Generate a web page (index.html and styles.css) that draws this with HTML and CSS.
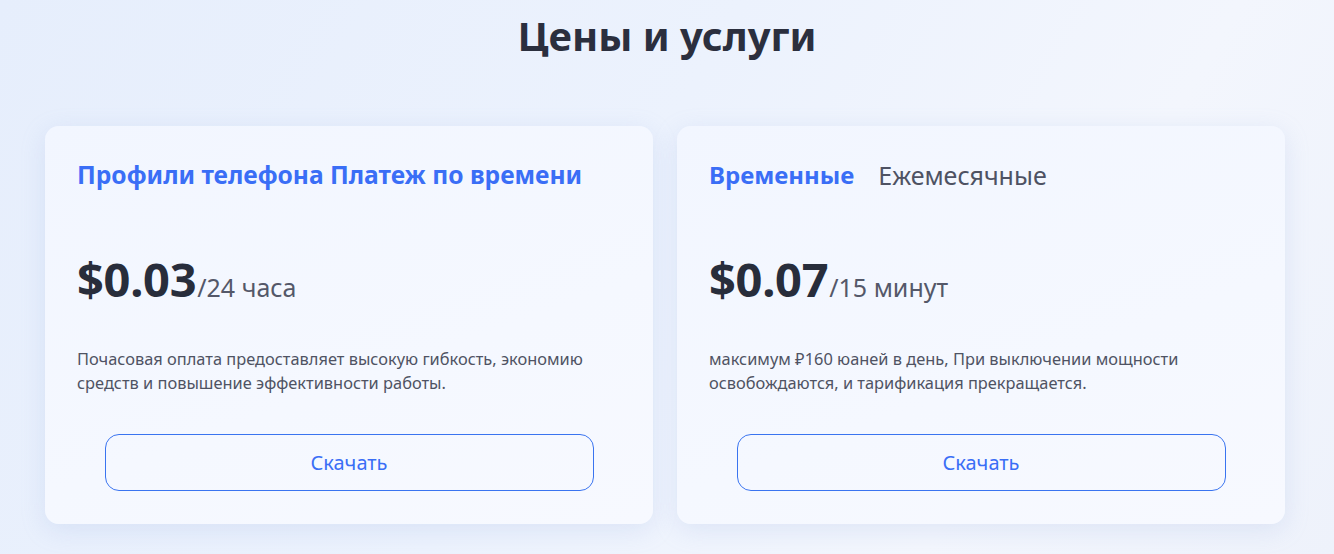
FILE: index.html
```html
<!DOCTYPE html>
<html lang="ru">
<head>
<meta charset="utf-8">
<link rel="stylesheet" href="styles.css">
</head>
<body>
<section class="pricing">
  <h1 class="title">Цены и услуги</h1>
  <div class="cards">
    <div class="card">
      <div class="card-head">
        <span class="tab active heading">Профили телефона Платеж по времени</span>
      </div>
      <div class="price"><span class="amount">$0.03</span><span class="unit">/24 часа</span></div>
      <p class="desc">Почасовая оплата предоставляет высокую гибкость, экономию средств и повышение эффективности работы.</p>
      <div class="btn-row"><button class="btn">Скачать</button></div>
    </div>
    <div class="card">
      <div class="card-head">
        <span class="tab active">Временные</span>
        <span class="tab">Ежемесячные</span>
      </div>
      <div class="price"><span class="amount">$0.07</span><span class="unit">/15 минут</span></div>
      <p class="desc">максимум ₽160 юаней в день, При выключении мощности освобождаются, и тарификация прекращается.</p>
      <div class="btn-row"><button class="btn">Скачать</button></div>
    </div>
  </div>
</section>
</body>
</html>
```

FILE: styles.css
```css
* { box-sizing: border-box; }
html, body { margin: 0; height: 100%; }
body {
  font-family: "Noto Sans", "Open Sans", sans-serif;
  background: linear-gradient(120deg, #e6eefc 0%, #ecf2fd 45%, #f3f6fd 75%, #eef2fb 100%);
  color: #2a2f3f;
}
.pricing {
  padding: 10px 45px 0;
}
.title {
  margin: 0;
  text-align: center;
  font-size: 40px;
  font-weight: 700;
  line-height: 52px;
  color: #2b2f3e;
}
.cards {
  margin-top: 64px;
  display: grid;
  grid-template-columns: 608px 608px;
  gap: 24px;
}
.card {
  background: linear-gradient(160deg, #f2f6ff 0%, #f5f8ff 60%, #f7f9ff 100%);
  border-radius: 14px;
  height: 398px;
  padding: 32px 32px 0;
  box-shadow: 0 6px 24px rgba(150, 175, 225, 0.22);
}
.card-head {
  display: flex;
  gap: 24px;
  height: 34px;
  align-items: center;
}
.tab {
  font-size: 25px;
  color: #4e5263;
  line-height: 30px;
}
.tab.active {
  font-size: 24px;
  color: #3a6ef6;
  font-weight: 700;
}
.tab.heading {
  font-size: 24.6px;
}
.price {
  margin-top: 52px;
  display: flex;
  align-items: baseline;
  line-height: 70px;
}
.amount {
  font-size: 47px;
  font-weight: 700;
  color: #282d3b;
  letter-spacing: -0.3px;
}
.unit {
  font-size: 25px;
  color: #545869;
  margin-left: 1px;
}
.desc {
  margin: 25px 0 0;
  font-size: 16.4px;
  line-height: 24px;
  color: #4f5363;
  max-width: 530px;
}
.btn-row {
  margin-top: 39px;
  display: flex;
  justify-content: center;
}
.btn {
  width: 489px;
  height: 57px;
  border: 1px solid #3a74f0;
  border-radius: 14px;
  background: transparent;
  color: #3a6ef6;
  font-family: inherit;
  font-size: 20px;
}
```
